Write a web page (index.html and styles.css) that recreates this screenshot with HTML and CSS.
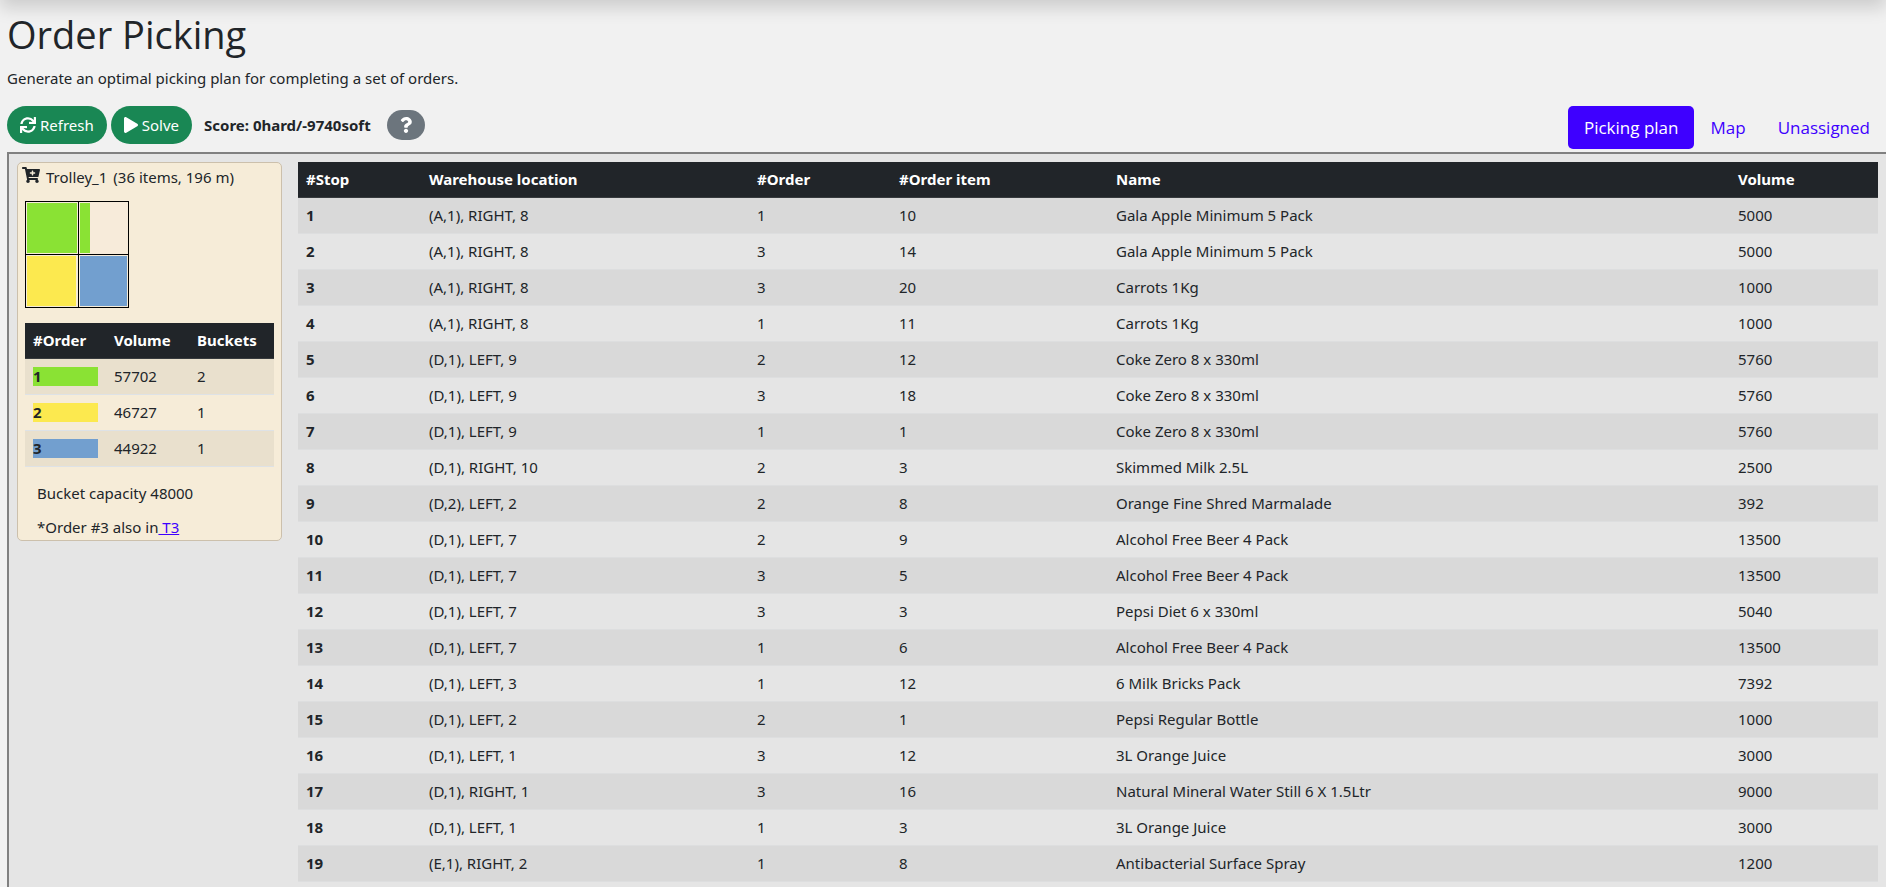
FILE: index.html
```html
<!DOCTYPE html>
<html lang="en">
<head>
<meta charset="utf-8">
<title>Order Picking</title>
<link rel="stylesheet" href="styles.css">
</head>
<body>
<header class="topbar"></header>
<main class="page">
  <h1 class="title">Order Picking</h1>
  <p class="lead">Generate an optimal picking plan for completing a set of orders.</p>
  <div class="toolbar">
    <div class="actions">
      <button class="btn btn-green" type="button"><svg class="icon" viewBox="0 0 512 512"><path d="M440.65 12.57l4 82.77A247.16 247.16 0 0 0 255.83 8C134.73 8 33.91 94.92 12.29 209.82A12 12 0 0 0 24.09 224h49.05a12 12 0 0 0 11.67-9.26 175.91 175.91 0 0 1 317-56.94l-101.46-4.86a12 12 0 0 0-12.57 12v47.41a12 12 0 0 0 12 12H500a12 12 0 0 0 12-12V12a12 12 0 0 0-12-12h-47.37a12 12 0 0 0-11.98 12.57zM255.83 432a175.61 175.61 0 0 1-146-77.8l101.8 4.87a12 12 0 0 0 12.57-12v-47.4a12 12 0 0 0-12-12H12a12 12 0 0 0-12 12V500a12 12 0 0 0 12 12h47.35a12 12 0 0 0 12-12.6l-4.15-82.57A247.17 247.17 0 0 0 255.83 504c121.11 0 221.93-86.92 243.55-201.82a12 12 0 0 0-11.8-14.18h-49.05a12 12 0 0 0-11.67 9.26A175.86 175.86 0 0 1 255.83 432z"/></svg>Refresh</button>
      <button class="btn btn-green" type="button"><svg class="icon icon-play" viewBox="0 0 448 512"><path d="M424.4 214.7L72.4 6.6C43.8-10.3 0 6.1 0 47.9V464c0 37.5 40.7 60.1 72.4 41.3l352-208c31.4-18.5 31.5-64.1 0-82.6z"/></svg>Solve</button>
      <span class="score">Score: 0hard/-9740soft</span>
      <button class="btn btn-help" type="button" aria-label="Score details"><svg class="icon icon-help" viewBox="0 0 384 512"><path d="M202.021 0C122.202 0 70.503 32.703 29.914 91.026c-7.363 10.58-5.093 25.086 5.178 32.874l43.138 32.709c10.373 7.865 25.132 6.026 33.253-4.148 25.049-31.381 43.63-49.449 82.757-49.449 30.764 0 68.816 19.799 68.816 49.631 0 22.552-18.617 34.134-48.993 51.164-35.423 19.86-82.299 44.576-82.299 106.405V320c0 13.255 10.745 24 24 24h72.471c13.255 0 24-10.745 24-24v-5.773c0-42.86 125.268-44.645 125.268-160.627C377.504 66.256 286.902 0 202.021 0zM192 373.459c-38.196 0-69.271 31.075-69.271 69.271 0 38.195 31.075 69.27 69.271 69.27s69.271-31.075 69.271-69.271-31.075-69.27-69.271-69.27z"/></svg></button>
    </div>
    <nav class="tabs">
      <a class="tab tab-active" href="#plan">Picking plan</a>
      <a class="tab" href="#map">Map</a>
      <a class="tab" href="#unassigned">Unassigned</a>
    </nav>
  </div>
  <section class="panel" id="plan">
    <article class="card">
      <h2 class="card-title"><svg class="cart" viewBox="0 0 576 512"><path d="M504.717 320H211.572l6.545 32h268.418c15.401 0 26.816 14.301 23.403 29.319l-5.517 24.276C523.112 414.668 536 433.828 536 456c0 31.202-25.519 56.444-56.824 55.994-29.823-.429-54.35-24.631-55.155-54.447-.44-16.287 6.085-31.049 16.803-41.548H231.176C241.553 426.165 248 440.326 248 456c0 31.813-26.528 57.431-58.67 55.938-28.54-1.325-51.751-24.385-53.251-52.917-1.158-22.034 10.436-41.455 28.051-51.586L93.883 64H24C10.745 64 0 53.255 0 40V24C0 10.745 10.745 0 24 0h102.529c11.401 0 21.228 8.021 23.513 19.19L159.208 64H551.99c15.401 0 26.816 14.301 23.403 29.319l-47.273 208C525.637 312.246 515.923 320 504.717 320zM408 168h-48v-40c0-8.837-7.163-16-16-16h-16c-8.837 0-16 7.163-16 16v40h-48c-8.837 0-16 7.163-16 16v16c0 8.837 7.163 16 16 16h48v40c0 8.837 7.163 16 16 16h16c8.837 0 16-7.163 16-16v-40h48c8.837 0 16-7.163 16-16v-16c0-8.837-7.163-16-16-16z"/></svg><span>Trolley_1</span><span>(36 items, 196 m)</span></h2>
      <div class="buckets">
        <div class="bucket"><div class="fill green" style="width:100%"></div></div>
        <div class="bucket bucket-part"><div class="fill green" style="width:21%"></div></div>
        <div class="bucket"><div class="fill yellow" style="width:98%"></div></div>
        <div class="bucket"><div class="fill blue" style="width:100%"></div></div>
      </div>
      <table class="grid orders">
        <colgroup><col class="o-order"><col class="o-volume"><col></colgroup>
        <thead><tr><th>#Order</th><th>Volume</th><th>Buckets</th></tr></thead>
        <tbody>
          <tr><th><div class="chip green">1</div></th><td>57702</td><td>2</td></tr>
          <tr><th><div class="chip yellow">2</div></th><td>46727</td><td>1</td></tr>
          <tr><th><div class="chip blue">3</div></th><td>44922</td><td>1</td></tr>
        </tbody>
      </table>
      <p class="note">Bucket capacity 48000</p>
      <p class="note">*Order #3 also in<a href="#t3"> T3</a></p>
    </article>
    <table class="grid stops">
      <colgroup><col class="s-stop"><col class="s-location"><col class="s-order"><col class="s-item"><col class="s-name"><col></colgroup>
      <thead><tr><th>#Stop</th><th>Warehouse location</th><th>#Order</th><th>#Order item</th><th>Name</th><th>Volume</th></tr></thead>
      <tbody>
        <tr><th>1</th><td>(A,1), RIGHT, 8</td><td>1</td><td>10</td><td>Gala Apple Minimum 5 Pack</td><td>5000</td></tr>
        <tr><th>2</th><td>(A,1), RIGHT, 8</td><td>3</td><td>14</td><td>Gala Apple Minimum 5 Pack</td><td>5000</td></tr>
        <tr><th>3</th><td>(A,1), RIGHT, 8</td><td>3</td><td>20</td><td>Carrots 1Kg</td><td>1000</td></tr>
        <tr><th>4</th><td>(A,1), RIGHT, 8</td><td>1</td><td>11</td><td>Carrots 1Kg</td><td>1000</td></tr>
        <tr><th>5</th><td>(D,1), LEFT, 9</td><td>2</td><td>12</td><td>Coke Zero 8 x 330ml</td><td>5760</td></tr>
        <tr><th>6</th><td>(D,1), LEFT, 9</td><td>3</td><td>18</td><td>Coke Zero 8 x 330ml</td><td>5760</td></tr>
        <tr><th>7</th><td>(D,1), LEFT, 9</td><td>1</td><td>1</td><td>Coke Zero 8 x 330ml</td><td>5760</td></tr>
        <tr><th>8</th><td>(D,1), RIGHT, 10</td><td>2</td><td>3</td><td>Skimmed Milk 2.5L</td><td>2500</td></tr>
        <tr><th>9</th><td>(D,2), LEFT, 2</td><td>2</td><td>8</td><td>Orange Fine Shred Marmalade</td><td>392</td></tr>
        <tr><th>10</th><td>(D,1), LEFT, 7</td><td>2</td><td>9</td><td>Alcohol Free Beer 4 Pack</td><td>13500</td></tr>
        <tr><th>11</th><td>(D,1), LEFT, 7</td><td>3</td><td>5</td><td>Alcohol Free Beer 4 Pack</td><td>13500</td></tr>
        <tr><th>12</th><td>(D,1), LEFT, 7</td><td>3</td><td>3</td><td>Pepsi Diet 6 x 330ml</td><td>5040</td></tr>
        <tr><th>13</th><td>(D,1), LEFT, 7</td><td>1</td><td>6</td><td>Alcohol Free Beer 4 Pack</td><td>13500</td></tr>
        <tr><th>14</th><td>(D,1), LEFT, 3</td><td>1</td><td>12</td><td>6 Milk Bricks Pack</td><td>7392</td></tr>
        <tr><th>15</th><td>(D,1), LEFT, 2</td><td>2</td><td>1</td><td>Pepsi Regular Bottle</td><td>1000</td></tr>
        <tr><th>16</th><td>(D,1), LEFT, 1</td><td>3</td><td>12</td><td>3L Orange Juice</td><td>3000</td></tr>
        <tr><th>17</th><td>(D,1), RIGHT, 1</td><td>3</td><td>16</td><td>Natural Mineral Water Still 6 X 1.5Ltr</td><td>9000</td></tr>
        <tr><th>18</th><td>(D,1), LEFT, 1</td><td>1</td><td>3</td><td>3L Orange Juice</td><td>3000</td></tr>
        <tr><th>19</th><td>(E,1), RIGHT, 2</td><td>1</td><td>8</td><td>Antibacterial Surface Spray</td><td>1200</td></tr>
      </tbody>
    </table>
  </section>
</main>
</body>
</html>
```
FILE: styles.css
```css
* { box-sizing: border-box; }

body {
  margin: 0;
  min-height: 100vh;
  display: flex;
  flex-direction: column;
  overflow-x: hidden;
  background: #f1f1f1;
  color: #212529;
  font: 15px/20px "Noto Sans", "Open Sans", sans-serif;
}

h1, h2, p { margin: 0; font-weight: 400; }

.topbar {
  height: 60px;
  margin-top: -60px;
  box-shadow: 0 8px 16px rgba(0, 0, 0, 0.15);
}

.page {
  flex: 1;
  display: flex;
  flex-direction: column;
  padding-left: 7px;
}

.title { padding-top: 10px; font-family: "Open Sans", sans-serif; font-size: 38px; line-height: 48px; }
.lead { padding: 9px 0 17px; line-height: 22px; }

.toolbar { display: flex; justify-content: space-between; height: 46px; }
.actions { display: flex; align-items: center; gap: 4px; height: 38px; }

.btn {
  display: flex;
  align-items: center;
  gap: 4px;
  border: 0;
  border-radius: 19px;
  color: #fff;
  font: inherit;
}
.btn-green { height: 38px; padding: 0 13px; background: #198754; }
.btn-help { height: 30px; padding: 0 13px; background: #6c757d; }
.icon { width: 16px; height: 16px; fill: currentColor; }
.icon-play { width: 14px; }
.icon-help { width: 12px; }
.score { margin: 0 12px 0 8px; font-weight: 700; }

.tabs { display: flex; }
.tab {
  height: 43px;
  padding: 8px 16px;
  border-radius: 5px;
  color: #3e00ff;
  font-family: "Open Sans", sans-serif;
  font-size: 17px;
  line-height: 27px;
  text-decoration: none;
}
.tab-active { background: #3e00ff; color: #fff; }

.panel {
  flex: 1;
  display: flex;
  align-items: flex-start;
  gap: 16px;
  padding: 8px;
  border: solid #808080;
  border-width: 2px 0 0 2px;
  background: #e5e5e5;
}

.card {
  flex: 0 0 265px;
  padding: 0 7px;
  border: 1px solid #ccc0ac;
  border-radius: 5px;
  background: #f6ecd8;
}
.card-title { display: flex; gap: 6px; padding-top: 3px; font-size: 15px; line-height: 22px; }
.cart { width: 18px; height: 16px; margin: 1px 0 0 -3px; fill: #212529; }

.buckets {
  display: grid;
  grid-template-columns: 52px 49px;
  gap: 1px;
  width: 104px;
  margin: 13px 0 15px;
  border: 1px solid #000;
  background: #000;
}
.bucket { height: 52px; padding: 1px; background: #f6ecd8; }
.bucket-part { background: #f7ebda; }
.fill { height: 100%; }

.green { background: #8ae234; }
.yellow { background: #fce94f; }
.blue { background: #729fcf; }

.grid { border-collapse: separate; border-spacing: 0; table-layout: fixed; width: 100%; text-align: left; }
.grid th, .grid td { height: 36px; padding: 7px 8px 8px; border-bottom: 1px solid #dee2e6; }
.grid thead th { border-color: #373b3e; background: #212529; color: #fff; }
.grid tbody tr:nth-child(odd) > * { background: rgba(0, 0, 0, 0.05); }
.o-order { width: 81px; }
.o-volume { width: 83px; }
.chip { line-height: 19px; }

.note { padding: 16px 0 0 12px; line-height: 20px; }
.note + .note { padding: 14px 0 3px 12px; }
.note a { color: #3e00ff; }

.stops { flex: 1; }
.stops tbody th, .stops tbody td { border-bottom-color: #dddedf; }
.s-stop { width: 123px; }
.s-location { width: 328px; }
.s-order { width: 142px; }
.s-item { width: 217px; }
.s-name { width: 622px; }
```
